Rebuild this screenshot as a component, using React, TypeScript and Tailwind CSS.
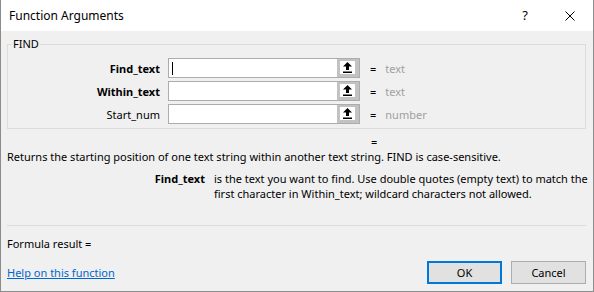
import React from 'react';

const ARGS = [
  { name: 'Find_text', bold: true, value: 'text', focused: true },
  { name: 'Within_text', bold: true, value: 'text', focused: false },
  { name: 'Start_num', bold: false, value: 'number', focused: false },
];

function PickIcon() {
  return (
    <svg width="9" height="11" viewBox="0 0 9 11" className="block">
      <path d="M4.5 0 L9 4.5 L6 4.5 L6 8 L3 8 L3 4.5 L0 4.5 Z" fill="#000" />
      <rect x="0" y="9.5" width="9" height="1.5" fill="#000" />
    </svg>
  );
}

function ArgRow({ name, bold, value, focused }: { name: string; bold: boolean; value: string; focused: boolean }) {
  return (
    <div className="flex items-center h-[20px]">
      <div className={`w-[152px] text-right ${bold ? 'font-bold' : ''}`}>{name}</div>
      <div className="ml-[8px] flex w-[192px] h-[20px] border border-[#acacac] bg-white">
        <div className="flex-1 flex items-center pl-[3px]">
          {focused && <div className="w-px h-[13px] bg-black" />}
        </div>
        <div className="w-[22px] h-full bg-[#c2c2c2] pl-[3px] pr-[4px] pt-[2px] pb-[3px]">
          <div className="w-full h-full bg-white flex items-center justify-center">
            <PickIcon />
          </div>
        </div>
      </div>
      <span className="ml-[10px]">=</span>
      <span className="ml-[9px] text-[#a0a0a0]">{value}</span>
    </div>
  );
}

export default function App() {
  return (
    <div className="w-[594px] h-[292px] bg-[#f0f0f0] border-x border-b border-[#8c8c8c] flex flex-col text-[11px] leading-[15px] text-black font-['Noto_Sans',sans-serif] overflow-hidden">
      <div className="h-[31px] shrink-0 bg-white flex items-center pl-[8px] text-[12px]">
        <span>Function Arguments</span>
        <span className="ml-auto text-[13px]">?</span>
        <svg width="10" height="10" viewBox="0 0 10 10" className="ml-[37px] mr-[18px]">
          <path d="M0.5 0.5 L9.5 9.5 M9.5 0.5 L0.5 9.5" stroke="#000" strokeWidth="1" />
        </svg>
      </div>

      <div className="pl-[6px] pr-[7px] flex flex-col flex-1">
        <fieldset className="mt-[5px] border border-[#dcdcdc] pb-[4px]">
          <legend className="ml-[4px] px-[1px] leading-[16px]">FIND</legend>
          <div className="mt-[6px] flex flex-col gap-[3px]">
            {ARGS.map(a => <ArgRow key={a.name} {...a} />)}
          </div>
        </fieldset>

        <div className="mt-[5px] pl-[364px]">=</div>
        <div>Returns the starting position of one text string within another text string. FIND is case-sensitive.</div>

        <div className="mt-[7px] flex">
          <div className="w-[198px] shrink-0 text-right font-bold">Find_text</div>
          <div className="ml-[9px] flex-1 whitespace-nowrap">
            is the text you want to find. Use double quotes (empty text) to match the<br />
            first character in Within_text; wildcard characters not allowed.
          </div>
        </div>

        <div className="mt-[24px] h-px bg-[#dcdcdc]" />

        <div className="mt-[10px]">Formula result =</div>

        <div className="mt-[10px] flex items-center">
          <span className="text-[#0066cc] underline">Help on this function</span>
          <button className="ml-auto w-[75px] h-[23px] border-2 border-[#0078d7] bg-[#e1e1e1]">OK</button>
          <button className="ml-[9px] w-[75px] h-[23px] border border-[#adadad] bg-[#e1e1e1]">Cancel</button>
        </div>
      </div>
    </div>
  );
}
